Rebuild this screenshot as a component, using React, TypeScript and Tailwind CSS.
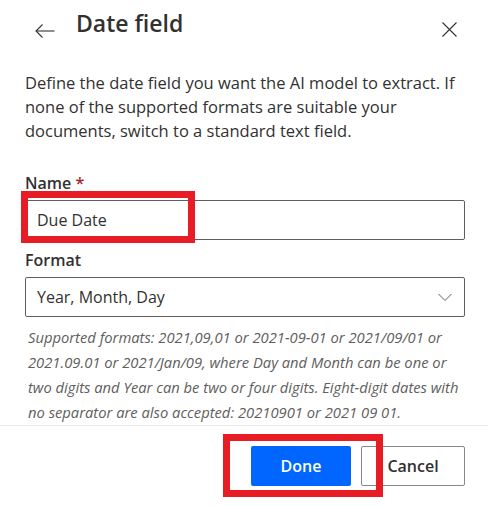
import React from "react";

export default function App() {
  const font = { fontFamily: '"Open Sans", "Noto Sans", sans-serif' };
  return (
    <div className="w-[488px] h-[506px] bg-white text-[#323130] overflow-hidden" style={font}>
      {/* Header */}
      <div className="flex items-start h-[56px] pl-[35px] pr-[31px]">
        <svg className="mt-[21px] shrink-0" width="20" height="20" viewBox="0 0 20 20" fill="none" stroke="#323130" strokeWidth="1.1">
          <path d="M19.5 10H1" />
          <path d="M7.5 3.5L1 10l6.5 6.5" />
        </svg>
        <h1 className="ml-[21px] mt-[7px] text-[23px] leading-[32px] font-semibold">Date field</h1>
        <svg className="ml-auto mt-[22px] shrink-0" width="15" height="15" viewBox="0 0 15 15" fill="none" stroke="#323130" strokeWidth="1.1">
          <path d="M0.5 0.5l14 14M14.5 0.5l-14 14" />
        </svg>
      </div>

      {/* Body */}
      <div className="pl-[25px] pr-[23px]">
        <p className="mt-[15px] text-[16.5px] leading-[24px] whitespace-nowrap">
          Define the date field you want the AI model to extract. If
          <br />
          none of the supported formats are suitable your
          <br />
          documents, switch to a standard text field.
        </p>

        <label className="block mt-[28px] text-[16px] leading-[24px] font-semibold">
          Name <span className="text-[#a4262c]">*</span>
        </label>
        <div className="relative mt-[5px]">
          <div className="h-[40px] border border-[#605e5c] rounded-[2px] flex items-center pl-[11px] text-[16px]">
            Due Date
          </div>
          <div className="absolute left-[-4px] top-[-9px] w-[174px] h-[52px] border-[7px] border-[#e81c24]" />
        </div>

        <label className="block mt-[8px] text-[16px] leading-[24px] font-semibold">Format</label>
        <div className="mt-[5px] h-[40px] border border-[#605e5c] rounded-[2px] flex items-center pl-[11px] pr-[12px] text-[16px]">
          <span>Year, Month, Day</span>
          <svg className="ml-auto" width="14" height="9" viewBox="0 0 14 9" fill="none" stroke="#605e5c" strokeWidth="1">
            <path d="M0.5 1l6.5 6.5L13.5 1" />
          </svg>
        </div>

        <p className="mt-[8px] pl-[3px] text-[14.75px] leading-[25px] italic text-[#605e5c] whitespace-nowrap">
          Supported formats: 2021,09,01 or 2021-09-01 or 2021/09/01 or
          <br />
          2021.09.01 or 2021/Jan/09, where Day and Month can be one or
          <br />
          two digits and Year can be two or four digits. Eight-digit dates with
          <br />
          no separator are also accepted: 20210901 or 2021 09 01.
        </p>
      </div>

      {/* Footer */}
      <div className="border-t border-[#edebe9]">
        <div className="flex justify-end gap-[10px] pr-[23px] pt-[20px]">
          <div className="relative">
            <button className="w-[100px] h-[40px] rounded-[2px] bg-[#0066ff] text-white text-[16px] font-semibold">
              Done
            </button>
            <div className="absolute left-[-28px] top-[-12px] w-[160px] h-[63px] border-[7px] border-[#e81c24]" />
          </div>
          <button className="w-[104px] h-[40px] rounded-[2px] border border-[#8a8886] bg-white text-[#323130] text-[16px] font-semibold">
            Cancel
          </button>
        </div>
      </div>
    </div>
  );
}
